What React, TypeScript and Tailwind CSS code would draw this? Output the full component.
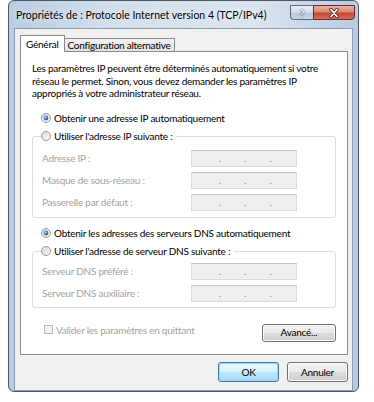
import React from 'react';

const Radio = ({ checked }: { checked?: boolean }) => (
  <svg width="10" height="10" viewBox="0 0 10 10" className="shrink-0">
    <defs>
      <linearGradient id="radioBg" x1="0" y1="0" x2="1" y2="1">
        <stop offset="0" stopColor="#d8d8d8" />
        <stop offset="1" stopColor="#fbfbfb" />
      </linearGradient>
      <radialGradient id="radioDot" cx="0.4" cy="0.35" r="0.7">
        <stop offset="0" stopColor="#a9d2f5" />
        <stop offset="0.6" stopColor="#3b78bf" />
        <stop offset="1" stopColor="#1d4e8c" />
      </radialGradient>
    </defs>
    <circle cx="5" cy="5" r="4.5" fill="url(#radioBg)" stroke="#9a9a9a" strokeWidth="1" />
    {checked && <circle cx="5" cy="5" r="2.4" fill="url(#radioDot)" />}
  </svg>
);

// disabled IP field with the three dots
const IpField = () => (
  <div className="flex h-[17px] w-[106px] items-center border border-[#dadada] border-t-[#c4c4c4] bg-[#efefef] pl-[3px] text-[10px] leading-none text-[#8e8e8e]">
    <span className="w-[25.5px] text-right">.</span>
    <span className="w-[25.5px] text-right">.</span>
    <span className="w-[25.5px] text-right">.</span>
  </div>
);

const FieldRow = ({ label }: { label: string }) => (
  <div className="flex h-[17px] items-center">
    <span className="w-[149px] text-[#a3a3a3]">{label}</span>
    <IpField />
  </div>
);

const WinButton = ({ label, primary, className }: { label: string; primary?: boolean; className?: string }) => (
  <div
    className={
      'flex items-center justify-center rounded-[3px] border text-black ' +
      (primary
        ? 'border-[#3d7bad] bg-[linear-gradient(#eaf6fd_0%,#d9f0fc_50%,#bee6fd_51%,#a7d9f5_100%)] shadow-[inset_0_0_0_1px_#9fd5f5] '
        : 'border-[#707070] bg-[linear-gradient(#f2f2f2_0%,#ebebeb_50%,#dddddd_51%,#cfcfcf_100%)] shadow-[inset_0_0_0_1px_#fcfcfc] ') +
      (className ?? '')
    }
  >
    {label}
  </div>
);

export default function App() {
  return (
    <div className="h-[402px] w-[374px] overflow-hidden bg-white font-['Lato',sans-serif]">
      <div className="ml-[8px] flex h-[392px] w-[351px] flex-col rounded-[6px] border border-[#4a5869] bg-[linear-gradient(90deg,#b9cde2_0%,#d3dfeb_30%,#dce5ee_70%,#b7cbe0_100%)]">
        {/* title bar */}
        <div className="flex h-[27px] items-start">
          <div className="mt-[7px] ml-[7px] flex-1 whitespace-nowrap text-[10.5px] leading-[14px] text-black [text-shadow:0_0_6px_#ffffff]">
            Propriétés de : Protocole Internet version 4 (TCP/IPv4)
          </div>
          <div className="mt-[4px] mr-[3px] flex">
            <div className="flex h-[15px] w-[23px] items-center justify-center rounded-bl-[4px] border border-r-0 border-[#5b6b7e] bg-[linear-gradient(#e8eef5_0%,#d3dde8_50%,#b9c8d8_51%,#c9d6e4_100%)] text-[10px] font-bold leading-none text-white [text-shadow:0_0_2px_#34495f,0_0_1px_#34495f]">
              ?
            </div>
            <div className="flex h-[15px] w-[42px] items-center justify-center rounded-br-[4px] border border-[#6b2a26] bg-[linear-gradient(#eab3a5_0%,#d98a7a_45%,#c7463a_55%,#d5705a_100%)]">
              <svg width="12" height="10" viewBox="0 0 12 10">
                <path d="M3 1.5 L9 8.5 M9 1.5 L3 8.5" stroke="#4b1612" strokeWidth="3.4" strokeLinecap="round" />
                <path d="M3 1.5 L9 8.5 M9 1.5 L3 8.5" stroke="#ffffff" strokeWidth="1.8" strokeLinecap="round" />
              </svg>
            </div>
          </div>
        </div>

        {/* client area */}
        <div className="mx-[5px] flex flex-1 flex-col border border-[#8b9db1] bg-[#f0f0f0] pt-[6px] pr-[4px] pb-[5px] pl-[5px] text-[10px] leading-[12.5px] tracking-[-0.25px] text-black">
          {/* tabs */}
          <div className="flex h-[16px] items-end">
            <div className="relative z-10 -mb-px flex h-[17px] items-center border border-b-0 border-[#898c95] bg-white px-[5px] text-black">
              Général
            </div>
            <div className="flex h-[13px] items-center border border-b-0 border-l-0 border-[#898c95] bg-[linear-gradient(#f2f2f2,#e3e3e3)] px-[3px]">
              Configuration alternative
            </div>
          </div>

          {/* tab panel */}
          <div className="flex h-[304px] flex-col border border-[#898c95] bg-white px-[11px] pt-[10px]">
            <p className="whitespace-nowrap">
              Les paramètres IP peuvent être déterminés automatiquement si votre
              <br />
              réseau le permet. Sinon, vous devez demander les paramètres IP
              <br />
              appropriés à votre administrateur réseau.
            </p>

            <div className="mt-[12px] flex h-[13px] items-center gap-[3px] pl-[9px]">
              <Radio checked />
              <span>Obtenir une adresse IP automatiquement</span>
            </div>

            <fieldset className="mt-[5px] rounded-[3px] border border-[#d5dfe5] pr-[36px] pb-[6px] pl-[9px]">
              <legend className="ml-[-1px] flex h-[13px] items-center gap-[3px] pr-[4px]">
                <Radio />
                <span>Utiliser l'adresse IP suivante :</span>
              </legend>
              <div className="mt-[7px] flex flex-col gap-[5px]">
                <FieldRow label="Adresse IP :" />
                <FieldRow label="Masque de sous-réseau :" />
                <FieldRow label="Passerelle par défaut :" />
              </div>
            </fieldset>

            <div className="mt-[9px] flex h-[13px] items-center gap-[3px] pl-[9px]">
              <Radio checked />
              <span>Obtenir les adresses des serveurs DNS automatiquement</span>
            </div>

            <fieldset className="mt-[5px] rounded-[3px] border border-[#d5dfe5] pr-[36px] pb-[5px] pl-[9px]">
              <legend className="ml-[-1px] flex h-[13px] items-center gap-[3px] pr-[4px]">
                <Radio />
                <span>Utiliser l'adresse de serveur DNS suivante :</span>
              </legend>
              <div className="mt-[5px] flex flex-col gap-[5px]">
                <FieldRow label="Serveur DNS préféré :" />
                <FieldRow label="Serveur DNS auxiliaire :" />
              </div>
            </fieldset>

            <div className="mt-[16px] flex items-start justify-between">
              <div className="flex items-center gap-[3px] pl-[12px] text-[#a3a3a3]">
                <div className="h-[9px] w-[9px] border border-[#b9b9b9] bg-[#f4f4f4]" />
                <span>Valider les paramètres en quittant</span>
              </div>
              <WinButton label="Avancé..." className="h-[18px] w-[74px]" />
            </div>
          </div>

          {/* dialog buttons */}
          <div className="mt-[7px] flex justify-end gap-[8px]">
            <WinButton label="OK" primary className="h-[20px] w-[61px]" />
            <WinButton label="Annuler" className="h-[20px] w-[61px]" />
          </div>
        </div>
      </div>
    </div>
  );
}
